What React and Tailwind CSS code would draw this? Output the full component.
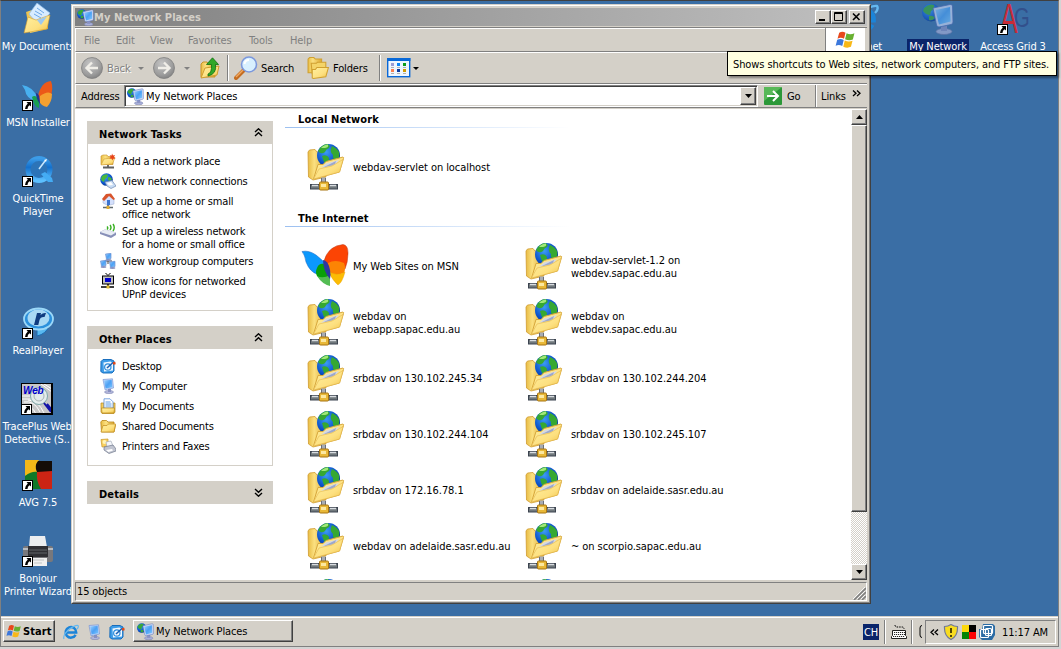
import React from 'react';

const RAISED =
  'border border-t-white border-l-white border-r-[#404040] border-b-[#404040] bg-[#d4d0c8] shadow-[inset_-1px_-1px_0_#808080]';

function Svg({ s = 16, vb = 16, children, className = '' }) {
  return (
    <svg width={s} height={s} viewBox={`0 0 ${vb} ${vb}`} className={'block shrink-0 ' + className}>
      {children}
    </svg>
  );
}

function Defs() {
  return (
    <svg width="0" height="0" className="absolute">
      <defs>
        <linearGradient id="fold" x1="0" y1="0" x2="1" y2="1">
          <stop offset="0" stopColor="#fff0a0" />
          <stop offset="0.6" stopColor="#fde080" />
          <stop offset="1" stopColor="#f0c040" />
        </linearGradient>
        <linearGradient id="foldb" x1="0" y1="0" x2="1" y2="0">
          <stop offset="0" stopColor="#e8bc44" />
          <stop offset="0.35" stopColor="#fbe080" />
          <stop offset="1" stopColor="#dca830" />
        </linearGradient>
        <radialGradient id="globe" cx="0.4" cy="0.35" r="0.7">
          <stop offset="0" stopColor="#3c9cf4" />
          <stop offset="0.7" stopColor="#0a50c8" />
          <stop offset="1" stopColor="#06307c" />
        </radialGradient>
        <linearGradient id="screen" x1="0" y1="0" x2="1" y2="1">
          <stop offset="0" stopColor="#9fd2ff" />
          <stop offset="0.5" stopColor="#4ba0f4" />
          <stop offset="1" stopColor="#7fc8ff" />
        </linearGradient>
        <radialGradient id="grayball" cx="0.4" cy="0.3" r="0.75">
          <stop offset="0" stopColor="#c4c4c4" />
          <stop offset="0.7" stopColor="#9c9c9c" />
          <stop offset="1" stopColor="#808080" />
        </radialGradient>
        <linearGradient id="aqua" x1="0" y1="0" x2="0" y2="1">
          <stop offset="0" stopColor="#3c9ce8" />
          <stop offset="0.4" stopColor="#1470cc" />
          <stop offset="1" stopColor="#5cc0ff" />
        </linearGradient>
      </defs>
    </svg>
  );
}

const Flag = ({ w = 16 }) => (
  <svg width={w} height={w} viewBox="0 0 20 20" className="block shrink-0">
    <path d="M4 3.500Q7 1.500 10 3.500L8.600 9.400Q5.500 7.400 2.400 9.200Z" fill="#e8481c" />
    <path d="M11 4Q14.500 6 18.500 4L17 10Q13.500 11.500 9.600 9.800Z" fill="#68b030" />
    <path d="M2.100 10.300Q5.300 8.500 8.300 10.500L6.900 16.200Q3.800 14.300 .6 16Z" fill="#3c78dc" />
    <path d="M9.300 11Q13 12.800 16.700 11.200L15.200 17Q11.500 18.600 7.900 16.800Z" fill="#f8b818" />
  </svg>
);

const NetPC = ({ s = 16 }) => (
  <Svg s={s} vb={32}>
    <ellipse cx="22" cy="28.500" rx="8" ry="3" fill="#a9b0d8" stroke="#7078a8" strokeWidth=".8" />
    <path d="M19 22h6v6h-6z" fill="#8a92c4" />
    <circle cx="9" cy="9.500" r="9" fill="url(#globe)" />
    <path d="M2 5Q7 0 12 2Q13 6 9 8L8 12Q4 12 1 8ZM7 13q4-1 6 2q-3 3-6 2z" fill="#39a838" />
    <path d="M11 5L28 1.500Q30 1 30.500 3L31 19Q31 21 29 21.500L17 24Q15 24 14.500 22Z" fill="#c9d6f4" stroke="#4a64b0" strokeWidth=".8" />
    <path d="M13.500 7L28 4L28.600 18.500L17 21.500Z" fill="url(#screen)" />
  </Svg>
);

const Computer = () => (
  <Svg>
    <ellipse cx="9" cy="14" rx="4.500" ry="1.600" fill="#b4b8dc" stroke="#6c74a4" strokeWidth=".5" />
    <path d="M8 11h3v3H8z" fill="#8890c0" />
    <path d="M3 1.500L12.500 .8L13.500 10L5 11.800Z" fill="#c4d6f8" stroke="#6c8cd0" strokeWidth=".6" />
    <path d="M4 2.500L11.600 1.800L12.400 9.200L5.600 10.600Z" fill="url(#screen)" />
  </Svg>
);

const ShowDesktop = () => (
  <Svg>
    <path d="M1 3.500L3 1.500H11L14 3V13L12 15H3L.8 13.500Z" fill="#3c9ce8" stroke="#0c64b8" strokeWidth=".9" />
    <path d="M3.500 4.500l7-1 2.500 2v7l-9 1z" fill="#f0f8ff" />
    <circle cx="7.800" cy="9" r="3.200" fill="none" stroke="#2c8cdc" strokeWidth="1.200" />
    <path d="M7 10L13 4.500" stroke="#1c60b0" strokeWidth="1.600" />
    <path d="M13 5.500L15.500 5" stroke="#e04818" strokeWidth="2.400" />
  </Svg>
);

const NetFolder = () => (
  <Svg s={48} vb={48}>
    <path d="M7 9L8.500 7L14 6.500L16 9L25 10V34L12 37L7.500 34Z" fill="url(#foldb)" stroke="#d09c30" strokeWidth=".8" />
    <circle cx="27.500" cy="12.500" r="11.500" fill="url(#globe)" />
    <path d="M17 8Q20 2 26 1Q30 2 28 5Q25 6 24 9Q20 12 17 8ZM31 3Q36 5 38 9Q39 14 36 18Q31 17 32 12Q28 9 31 3ZM21 13q5-2 7 2q0 5-3 7q-3-4-4-9z" fill="#36a832" />
    <path d="M20 5q3-3.500 7-3.500q1 3-3 3.500z" fill="#a0e878" />
    <path d="M12.500 36L17 21.500H22L25 18.500L42 14Q43 14.500 42.500 15.500L38.500 29Z" fill="url(#fold)" stroke="#d8a83c" strokeWidth="1" />
    <path d="M20 25L25 20.500L38 17L35 21Z" fill="#d4d8e4" />
    <path d="M22 24.500L35 18L34 21L31 22.500Z" fill="#9ca8cc" />
    <path d="M12.500 36L18 26L31 23L42 16.500L38.500 29Z" fill="url(#fold)" stroke="#e4b850" strokeWidth=".6" />
    <path d="M20 34.500h5V40h-5z" fill="#a8acb4" />
    <path d="M20.500 35v5M24.500 35v5" stroke="#5c6068" strokeWidth=".8" />
    <rect x="9.500" y="41.500" width="27" height="4.500" fill="#70787c" stroke="#3c4450" strokeWidth="1" />
    <path d="M11 42.500h6M29 42.500h6" stroke="#d8dce0" strokeWidth="1.500" />
    <rect x="18.500" y="39" width="9" height="8" rx="1" fill="#e8b838" stroke="#a87410" />
    <path d="M20 41h5v3h-5z" fill="#fce8a0" />
  </Svg>
);

const MsnBig = () => (
  <Svg s={48} vb={48}>
    <path d="M1 9.500Q8 8 15 13Q20 17 23 20L22 30L16 32Q9 30 5 20Q4 13 1 9.500Z" fill="#0c98fc" stroke="#1060c0" strokeWidth=".5" />
    <path d="M23 19Q27 4 42 2.500Q47 3 47 11Q47 20 44 27L27 28Z" fill="#fc4404" stroke="#b83414" strokeWidth=".5" />
    <path d="M27 21Q34 17 43 21Q45 26 43 31L36 33L28 31Z" fill="#fc8404" />
    <path d="M27 29Q35 35 44 30Q41 41 37 43Q32 39 27 29Z" fill="#fcbc04" stroke="#e8a000" strokeWidth=".4" />
    <path d="M16 26Q18 21 23 22L29 34L27 37Q20 38 16 34Q14 30 16 26Z" fill="#08a008" />
    <path d="M16 34Q22 37 29 33V44Q21 42 16 34Z" fill="#54bc54" />
    <path d="M22 18Q27 18 29 28Q30 33 29 37Q22 29 22 18Z" fill="#2c38a0" />
  </Svg>
);

const Shortcut = () => (
  <svg width="11" height="11" viewBox="0 0 11 11" className="absolute bottom-0 left-0">
    <rect x=".5" y=".5" width="10" height="10" fill="#fff" stroke="#000" />
    <path d="M4.500 2H9V6.500L7.600 5.200Q5.500 6.500 5.500 9H3Q3 6 5.800 3.500Z" fill="#000" />
  </svg>
);

const DocsBig = () => (
  <Svg s={32} vb={32}>
    <path d="M4 9L10 7L26 13V26L8 30Z" fill="url(#foldb)" />
    <path d="M7 11L15 0L28 10L18 24Z" fill="#d8ecff" stroke="#88b8e8" strokeWidth=".7" />
    <path d="M13 8L20 12M12 11L19 15M15 5L22 10" stroke="#6ca8e8" strokeWidth="1" />
    <path d="M2 30L6 14L14 17L28 12L25 26Z" fill="url(#fold)" stroke="#d09c30" strokeWidth=".6" />
    <path d="M15 17L25 13.500L19 22Z" fill="#9cc8f0" />
  </Svg>
);
const MsnSmall = () => (
  <Svg s={32} vb={32}>
    <path d="M0 6Q10 7 16 19L13 22Q4 19 3 11Z" fill="#48b0f0" />
    <path d="M16 17Q19 3 29 2Q32 10 28 19L18 23Z" fill="#ec5818" />
    <path d="M18 17Q26 11 30 15Q30 23 25 28Q19 27 17 22Z" fill="#f4a030" />
    <path d="M10 18Q14 15 17 22L17 29Q12 28 10 18Z" fill="#18a050" />
    <path d="M14 14Q18 14 18 25Q14 20 14 14Z" fill="#203890" />
  </Svg>
);
const QuickTime = () => (
  <Svg s={32} vb={32}>
    <circle cx="17" cy="14.500" r="11" fill="#2c74b8" stroke="url(#aqua)" strokeWidth="5" />
    <path d="M19 19L26 27H31L30 23L23 17Z" fill="#44acf4" />
    <path d="M17 14L23 6" stroke="#c8e8ff" strokeWidth="1.600" />
    <path d="M22 5l3-1-1 3z" fill="#fff" />
  </Svg>
);
const Real = () => (
  <Svg s={32} vb={32}>
    <path d="M15 29L15 22L27 19Q24 27 15 29Z" fill="#58b8f0" stroke="#1c6ab0" />
    <ellipse cx="16.500" cy="12" rx="14.500" ry="10.500" fill="#2c90dc" stroke="#9cd8f8" strokeWidth="1.800" />
    <ellipse cx="16.500" cy="11" rx="11" ry="8.500" fill="#a8d8f4" />
    <path d="M12 18L15 6H19L18.500 8Q21 5.500 24 6L22.500 10Q18.500 9.500 17.500 13L16.300 18Z" fill="#103c80" />
  </Svg>
);
const Trace = () => (
  <div className="relative h-8 w-8 overflow-hidden border border-b-2 border-r-2 border-black bg-[#c8c8c8]">
    <svg width="30" height="30" viewBox="0 0 30 30">
      <path d="M0 12L14 12M0 15L12 15M2 18Q12 16 18 28M6 16Q16 16 22 29M0 24Q10 20 14 30M19 0L30 8M22 0L30 5" stroke="#fff" fill="none" strokeWidth="1" />
      <circle cx="17" cy="12" r="8.500" fill="#e4ecec" stroke="#80a8a8" />
      <circle cx="17" cy="12" r="5" fill="none" stroke="#a8b4b4" />
      <path d="M22 19L29 28M25 20L30 26" stroke="#1414a8" strokeWidth="2" />
    </svg>
    <span className="absolute left-[1px] top-[1px] font-['Liberation_Sans'] text-[10px] font-bold italic leading-[12px] text-[#0000cc]">Web</span>
  </div>
);
const Avg = () => (
  <Svg s={32} vb={32}>
    <path d="M3 1H17Q13 6 15 13L3 17Z" fill="#f4b818" />
    <path d="M16 2H30V14L15 13Q12 7 16 2Z" fill="#140c08" />
    <path d="M3 17Q10 12 15 13Q14 22 20 30H3Z" fill="#107828" />
    <path d="M15 13L30 12V30H19Q14 22 15 13Z" fill="#cc2414" />
  </Svg>
);
const Printer = () => (
  <Svg s={32} vb={32}>
    <path d="M8 1H23L25 12H7Z" fill="#eceef0" />
    <rect x="1" y="11" width="30" height="16" rx="2" fill="#78787c" />
    <path d="M1 14H31" stroke="#b8bcc0" strokeWidth="2" />
    <rect x="6" y="11" width="20" height="11" fill="#303034" />
    <path d="M7 15H25M7 18H25" stroke="#606468" />
    <path d="M8 23H25V31H8Z" fill="#f0f0f0" />
    <path d="M10 25H22M12 28H20" stroke="#c0c4c4" />
  </Svg>
);
const IE = ({ s = 16 }) => (
  <Svg s={s}>
    <path d="M12.600 10.800A5.300 5.300 0 1 1 13.200 8.500H4" fill="none" stroke="#1c84d8" strokeWidth="2.500" />
    <path d="M1 15Q-.5 11 6 5.500Q12 1 15 1.500Q16 3 14 5" fill="none" stroke="#64b8f0" strokeWidth="1.200" />
  </Svg>
);
const AG = () => (
  <div className="relative h-8 w-8">
    <span className="absolute left-[3px] top-0 origin-left scale-x-[0.62] font-['Liberation_Sans'] text-[43px] leading-[31px] text-[#c82c38]">A</span>
    <span className="absolute left-[17px] top-[6px] origin-left scale-x-75 font-['Liberation_Sans'] text-[27px] leading-[19px] text-[#32508c]">G</span>
  </div>
);

function DeskIcon({ icon, label, pos, shortcut = true, selected = false }) {
  return (
    <div className={'absolute flex w-[76px] flex-col items-center ' + pos}>
      <div className={'relative h-8 w-8 ' + (selected ? 'opacity-65' : '')}>
        {icon}
        {shortcut && <Shortcut />}
      </div>
      <div
        className={
          'mt-1 whitespace-pre px-0.5 pt-px text-center leading-[13px] text-white ' + (selected ? 'bg-[#0a246a]' : '')
        }
      >
        {label}
      </div>
    </div>
  );
}

/* Small sidebar icons */
const AddPlace = () => (
  <Svg>
    <path d="M1 3l2-1h4l1 1.500h5v8H1z" fill="url(#foldb)" stroke="#c89028" strokeWidth=".6" />
    <path d="M1 12L4 6L15 4.500L12.500 11Z" fill="url(#fold)" stroke="#c89028" strokeWidth=".5" />
    <path d="M12 .5l1 2 2-.5-1 2 1.500 1.500-2.300.3-.8 1.700-1-2-2 .2 1.300-1.700-1-1.700 2 .2z" fill="#e84418" />
    <path d="M3 14.500h11M8 12v2" stroke="#606060" strokeWidth="1.800" />
  </Svg>
);
const ViewConn = () => (
  <Svg>
    <circle cx="6.500" cy="6.500" r="6.300" fill="url(#globe)" />
    <path d="M2 3Q6 0 8 2Q7 5 5 6L4 9Q1 8 1 6ZM8 4q3 0 4 2q-2 3-4 1z" fill="#48b83c" />
    <path d="M5 9L12 7.500L16 13L11 15.500L7 13Z" fill="#c8dcf4" stroke="#7088b0" strokeWidth=".7" />
    <path d="M7 10L11 9L13 12L9 12.500Z" fill="#fff" />
  </Svg>
);
const Home = () => (
  <Svg>
    <path d="M3 6L9 2L14 6V11L8 12.500L3 10Z" fill="#d4e0fc" stroke="#98a8cc" strokeWidth=".5" />
    <path d="M2 6L6 1L11 .5L15 6L13.500 7L9 3L4 8Z" fill="#d8542c" />
    <path d="M7 7h3v5H7z" fill="#3c74d0" />
    <path d="M3 14.500h10M8 12v2" stroke="#60686c" strokeWidth="1.600" />
    <rect x="6.500" y="13" width="3" height="3" fill="#e0ac30" />
  </Svg>
);
const Wireless = () => (
  <Svg>
    <path d="M0 9L5 6.500L16 9.500V12L11 15L0 11Z" fill="#8890b8" />
    <path d="M0 9L5 6.500L16 9.500L11 12.500Z" fill="#e8ecf4" />
    <path d="M7 3.500q1.500 1.500 0 3M10 2q2 2.500 0 5M13 1q2.500 3.500 0 7" fill="none" stroke="#38b020" strokeWidth="1.400" />
  </Svg>
);
const Pc = ({ x, y }) => (
  <g transform={`translate(${x} ${y})`}>
    <ellipse cx="3.500" cy="7" rx="3" ry="1" fill="#8c94c0" />
    <path d="M.5 1L6 .3V5.500L1.500 6.300Z" fill="url(#screen)" stroke="#7090d0" strokeWidth=".7" />
  </g>
);
const Workgroup = () => (
  <Svg>
    <path d="M5 8h7M8 6v5" stroke="#484848" />
    <Pc x={5} y={0} />
    <Pc x={0} y={7} />
    <Pc x={9} y={8} />
  </Svg>
);
const Upnp = () => (
  <Svg>
    <path d="M5.500 0L8 2.500L10.500 0" stroke="#000" fill="none" />
    <rect x="2.500" y="3" width="11" height="8" fill="#c0c0c0" stroke="#000" />
    <rect x="5" y="5" width="6" height="4" fill="#0000d0" />
    <path d="M1 14h14M8 11v3" stroke="#000" strokeWidth="1.400" strokeDasharray="6 1" />
    <rect x="6.500" y="12.500" width="3" height="3" fill="#e8c030" />
  </Svg>
);
const MyDocs = () => (
  <Svg>
    <path d="M1 5h3v8h9V5h2v9l-1 1.500H2L1 14z" fill="#f4cc5c" stroke="#b88818" strokeWidth=".7" />
    <path d="M4 .8h6l3 3V10H4z" fill="#fff" stroke="#5c90d8" strokeWidth=".8" />
    <path d="M5.500 4h5M5.500 6h6M5.500 8h6" stroke="#5c9ce4" />
    <path d="M1.500 10h13l-.5 5H2z" fill="url(#fold)" stroke="#b88818" strokeWidth=".7" />
  </Svg>
);
const Shared = () => (
  <Svg>
    <path d="M.8 4L2 2.500h4.500L8 4h6v2.500l1.500.5L14 14H1.500z" fill="url(#foldb)" stroke="#b88418" strokeWidth=".8" />
    <path d="M1 14L3 7.500h4L8.500 6H15.500L14 14z" fill="url(#fold)" stroke="#c89428" strokeWidth=".8" />
  </Svg>
);
const Printers = () => (
  <Svg>
    <path d="M1 1.500L8 1v7L2 9z" fill="#f8d060" stroke="#c89828" strokeWidth=".7" />
    <circle cx="4.500" cy="4" r="2" fill="#fff4b8" />
    <path d="M6 4l5-1 2 5-6 1z" fill="#f4f6fa" stroke="#9ca4b4" strokeWidth=".6" />
    <path d="M4 9L13 7L16 11V13L9 15.500L4 12Z" fill="#c0c4d0" stroke="#70788c" strokeWidth=".7" />
    <path d="M6 12l6-1 1 1.500-4.500 1.500z" fill="#fff" />
  </Svg>
);

const Chevrons = ({ down = false }) => (
  <svg width="9" height="9" viewBox="0 0 9 9" className={down ? 'rotate-180' : ''}>
    <path d="M1 4L4.500 .8L8 4M1 8L4.500 4.800L8 8" fill="none" stroke="#000" strokeWidth="1.400" />
  </svg>
);

function Panel({ title, items, height, down }) {
  return (
    <section className={'flex w-[186px] flex-col ' + height}>
      <header className="flex h-[23px] shrink-0 items-center justify-between bg-[#d4d0c8] pl-3 pr-[10px]">
        <span className="pt-[3px] font-bold tracking-[0.15px]">{title}</span>
        <Chevrons down={down} />
      </header>
      {items && (
        <ul className="flex flex-1 flex-col gap-1 border border-t-0 border-[#d4d0c8] pl-3 pt-[10px]">
          {items.map(([icon, text]) => (
            <li key={text} className="flex min-h-4 items-start gap-[6px]">
              <span className="-mt-px h-4">{icon}</span>
              <span className="-mb-px mt-px whitespace-pre tracking-[-0.17px]">{text}</span>
            </li>
          ))}
        </ul>
      )}
    </section>
  );
}

const tasks = [
  [<AddPlace />, 'Add a network place'],
  [<ViewConn />, 'View network connections'],
  [<Home />, 'Set up a home or small\noffice network'],
  [<Wireless />, 'Set up a wireless network\nfor a home or small office'],
  [<Workgroup />, 'View workgroup computers'],
  [<Upnp />, 'Show icons for networked\nUPnP devices'],
];
const places = [
  [<ShowDesktop />, 'Desktop'],
  [<Computer />, 'My Computer'],
  [<MyDocs />, 'My Documents'],
  [<Shared />, 'Shared Documents'],
  [<Printers />, 'Printers and Faxes'],
];
const internet = [
  'My Web Sites on MSN',
  'webdav-servlet-1.2 on\nwebdev.sapac.edu.au',
  'webdav on\nwebapp.sapac.edu.au',
  'webdav on\nwebdev.sapac.edu.au',
  'srbdav on 130.102.245.34',
  'srbdav on 130.102.244.204',
  'srbdav on 130.102.244.104',
  'srbdav on 130.102.245.107',
  'srbdav on 172.16.78.1',
  'srbdav on adelaide.sasr.edu.au',
  'webdav on adelaide.sasr.edu.au',
  '~ on scorpio.sapac.edu.au',
  '',
  '',
];

const Item = ({ text }) => (
  <li className="flex h-[56px] w-[218px] items-center">
    <span className="mr-1 w-12 shrink-0">{text.includes('MSN') ? <MsnBig /> : <NetFolder />}</span>
    <span className="whitespace-pre pt-px tracking-[-0.07px]">{text}</span>
  </li>
);

const GroupTitle = ({ children }) => (
  <div className="h-[18px] w-[285px]">
    <h2 className="h-[17px] pl-[13px] pt-[3px] font-bold tracking-[0.1px]">{children}</h2>
    <div className="h-px bg-gradient-to-r from-[#9cc0f0] to-white" />
  </div>
);

const Down = ({ c = '#000', w = 6 }) => (
  <svg width={w} height={w > 6 ? 4 : 3} viewBox="0 0 6 3" preserveAspectRatio="none" className="block shrink-0">
    <path d="M0 0H6L3 3Z" fill={c} />
  </svg>
);

const Vsep = () => <div className="h-[26px] w-[2px] shrink-0 border-l border-r border-l-[#808080] border-r-white" />;

const Ball = ({ back }) => (
  <Svg s={22} vb={22}>
    <circle cx="11" cy="11" r="10.500" fill="url(#grayball)" stroke="#808080" strokeWidth=".8" />
    <path
      d={back ? 'M17 11H6M11 5.500L5.500 11L11 16.500' : 'M5 11H16M11 5.500L16.500 11L11 16.500'}
      fill="none"
      stroke="#f0eee8"
      strokeWidth="2.400"
    />
  </Svg>
);

function TitleBar() {
  const cap = 'flex h-[14px] w-4 items-center justify-center ' + RAISED;
  return (
    <div className="flex h-[18px] shrink-0 items-center bg-gradient-to-r from-[#808080] to-[#c0c0c0] px-0.5">
      <NetPC s={17} />
      <span className="flex-1 pt-px font-bold tracking-[0.05px] text-[#d4d0c8]">My Network Places</span>
      <button className={cap}>
        <svg width="12" height="10" viewBox="0 0 12 10"><path d="M2 8h6" stroke="#000" strokeWidth="2" /></svg>
      </button>
      <button className={cap}>
        <svg width="12" height="10" viewBox="0 0 12 10"><path d="M1.500 .5h8v8h-8zM1.500 1.500h8" fill="none" stroke="#000" /></svg>
      </button>
      <button className={'ml-0.5 ' + cap}>
        <svg width="12" height="10" viewBox="0 0 12 10"><path d="M2 1.500L8.500 8M8.500 1.500L2 8" stroke="#000" strokeWidth="1.600" /></svg>
      </button>
    </div>
  );
}

function MenuBar() {
  return (
    <div className="flex h-[24px] shrink-0 border-b border-l border-b-[#808080] border-l-white bg-[#d4d0c8]">
      <nav className="flex flex-1 items-center border-t border-white pl-2 text-[#808080]">
        <span className="w-8">File</span>
        <span className="w-[34px]">Edit</span>
        <span className="w-[38px]">View</span>
        <span className="w-[61px]">Favorites</span>
        <span className="w-[41px]">Tools</span>
        <span>Help</span>
      </nav>
      <div className="flex w-[40px] items-center justify-center border-l border-[#808080] bg-white">
        <Flag w={21} />
      </div>
      <div className="w-[2px]" />
    </div>
  );
}

function ToolBar() {
  return (
    <div className="flex h-[32px] shrink-0 items-center border-b border-l border-t border-b-[#808080] border-l-white border-t-white pl-[5px]">
      <Ball back />
      <span className="w-[35px] pl-1 text-[#808080] [text-shadow:1px_1px_0_#fff]">Back</span>
      <Down c="#808080" />
      <span className="w-[9px]" />
      <Ball />
      <span className="w-[9px]" />
      <Down c="#808080" />
      <span className="w-[10px]" />
      <Svg s={22} vb={22}>
        <path d="M1 7l2-2h4l1 2h7v13H1z" fill="url(#foldb)" stroke="#c89428" />
        <path d="M1 21L5 11L19 9L17 18Z" fill="url(#fold)" stroke="#d09c30" />
        <path d="M8 17Q12 16 11.500 7.500H6.500L12.500 .8L18.500 7.500H15.500Q17 17 8 19Z" fill="#30a828" stroke="#107010" strokeWidth=".8" />
      </Svg>
      <span className="w-[5px]" />
      <Vsep />
      <Svg s={24} vb={24} className="ml-[5px]">
        <path d="M2 22L10 14" stroke="#c46c20" strokeWidth="4" strokeLinecap="round" />
        <path d="M2 21L9 14" stroke="#f0a860" strokeWidth="1.500" />
        <circle cx="15" cy="8.500" r="7.500" fill="#d8f0ff" stroke="#7c98dc" strokeWidth="1.600" />
        <path d="M10.500 8Q11 4 15 4" stroke="#fff" strokeWidth="2" fill="none" />
      </Svg>
      <span className="w-[49px] pl-[3px]">Search</span>
      <Svg s={23} vb={22}>
        <path d="M1 2l1.500-1.500h4L8 2h6v13H1z" fill="url(#foldb)" stroke="#d0a030" />
        <path d="M4 6h5l1-1h8v11H5z" fill="#f4d468" stroke="#d0a030" />
        <path d="M5 20V12h3l1.500-2h11L18 19L6 20.500Z" fill="url(#fold)" stroke="#d0a030" />
      </Svg>
      <span className="w-[49px] pl-[3px]">Folders</span>
      <Vsep />
      <svg width="24" height="20" viewBox="0 0 24 20" className="ml-[6px] block">
        <rect x=".7" y=".7" width="22" height="18" fill="#eef6ff" stroke="#0868d8" strokeWidth="1.400" />
        <path d="M0 1.500h23.400" stroke="#0868d8" strokeWidth="3" />
        <path d="M4 6.500h3" stroke="#9c9cd4" strokeWidth="3" />
        <path d="M10 6.500h3" stroke="#0c84f4" strokeWidth="3" />
        <path d="M16 6.500h3" stroke="#0c9c1c" strokeWidth="3" />
        <path d="M4 12.500h3" stroke="#fc8050" strokeWidth="3" />
        <path d="M10 12.500h3" stroke="#0c3ca0" strokeWidth="3" />
        <path d="M16 12.500h3" stroke="#d09c04" strokeWidth="3" />
        <path d="M4 9.500h3m3 0h3m3 0h3M4 15.500h3m3 0h3m3 0h3" stroke="#b0b0b0" />
      </svg>
      <span className="w-[2px]" />
      <Down />
    </div>
  );
}

function AddressBar() {
  return (
    <div className="flex h-[24px] shrink-0 border-b border-l border-t border-b-[#808080] border-l-white border-t-white pl-[5px]">
      <span className="w-[43px] pt-[5px]">Address</span>
      <div className="flex h-[22px] w-[634px] items-center border border-b-white border-l-[#808080] border-r-white border-t-[#808080] bg-white pl-[2px] shadow-[inset_1px_1px_0_#404040,inset_-1px_-1px_0_#d4d0c8]">
        <NetPC s={17} />
        <span className="flex-1 pl-[2px] pt-px">My Network Places</span>
        <button className={'mr-px flex h-[18px] w-4 items-center justify-center ' + RAISED}>
          <Down w={7} />
        </button>
      </div>
      <div className="ml-[6px] flex w-[52px] items-center border-r border-[#808080]">
        <svg width="18" height="18" viewBox="0 0 18 18">
          <rect width="18" height="18" rx="1" fill="#2c9838" />
          <path d="M0 0h18L0 14z" fill="#58b858" />
          <path d="M3 9h11M9 4l5 5-5 5" fill="none" stroke="#fff" strokeWidth="2" />
        </svg>
        <span className="pl-[5px]">Go</span>
      </div>
      <div className="flex flex-1 border-l border-white pl-1 pt-[5px]">
        <span className="w-[31px]">Links</span>
        <svg width="9" height="7" viewBox="0 0 9 7">
          <path d="M1 .5L4 3.300L1 6M5 .5L8 3.300L5 6" fill="none" stroke="#000" strokeWidth="1.300" />
        </svg>
      </div>
    </div>
  );
}

function ExplorerWindow() {
  return (
    <div className="absolute left-[71px] top-[4px] h-[600px] w-[800px] border border-b-[#404040] border-l-[#d4d0c8] border-r-[#404040] border-t-[#d4d0c8] bg-[#d4d0c8]">
      <div className="flex h-full flex-col border border-b-[#808080] border-l-white border-r-[#808080] border-t-white px-[2px] pb-[2px] pt-[2px]">
        <TitleBar />
        <div className="mt-px h-px shrink-0 bg-[#808080]" />
        <MenuBar />
        <ToolBar />
        <AddressBar />
        <div className="mt-px flex h-[471px] shrink-0 bg-white">
          <aside className="flex w-[210px] flex-col gap-[15px] pl-3 pt-[12px]">
            <Panel title="Network Tasks" items={tasks} height="h-[190px]" />
            <Panel title="Other Places" items={places} height="h-[140px]" />
            <Panel title="Details" height="h-[23px]" down />
          </aside>
          <main className="h-full flex-1 overflow-hidden">
            <div className="h-px" />
            <GroupTitle>Local Network</GroupTitle>
            <ul className="flex pl-4 pt-[11px]">
              <Item text="webdav-servlet on localhost" />
            </ul>
            <div className="h-[14px]" />
            <GroupTitle>The Internet</GroupTitle>
            <ul className="flex flex-wrap pl-4 pt-[11px]">
              {internet.map((t, i) => (
                <Item key={i} text={t} />
              ))}
            </ul>
          </main>
          <div className="flex w-4 flex-col bg-[#eae8e4]">
            <button className={'flex h-4 items-center justify-center ' + RAISED}>
              <span className="rotate-180"><Down w={7} /></span>
            </button>
            <div className={'h-[387px] ' + RAISED} />
            <div className="flex-1 bg-[repeating-conic-gradient(#fff_0_25%,#d4d0c8_0_50%)] bg-[length:2px_2px]" />
            <button className={'flex h-4 items-center justify-center ' + RAISED}>
              <Down w={7} />
            </button>
          </div>
        </div>
        <footer className="mt-[2px] flex h-[19px] shrink-0 items-center justify-between border border-b-white border-l-[#808080] border-r-white border-t-[#808080] pl-px">
          <span>15 objects</span>
          <svg width="13" height="13" viewBox="0 0 13 13" className="self-end">
            <path d="M1 13L13 1M5 13L13 5M9 13L13 9" stroke="#808080" strokeWidth="1.600" />
            <path d="M0 12L12 0M4 12L12 4M8 12L12 8" stroke="#fff" strokeWidth=".8" />
          </svg>
        </footer>
      </div>
    </div>
  );
}

function Taskbar() {
  return (
    <div className="flex h-[29px] shrink-0 items-start border-t border-white bg-[#d4d0c8] pl-[2px] pt-[2px]">
      <button className={'flex h-[22px] w-[52px] items-center pl-0.5 ' + RAISED}>
        <Flag w={16} />
        <span className="pl-px pt-px font-bold tracking-[0.1px]">Start</span>
      </button>
      <div className="flex h-[23px] w-[78px] items-center gap-[7px] pl-2">
        <IE />
        <Computer />
        <ShowDesktop />
      </div>
      <button className={'flex h-[22px] w-[160px] items-center pl-[3px] ' + RAISED}>
        <NetPC s={17} />
        <span className="pl-[2px] pt-px">My Network Places</span>
      </button>
      <div className="flex-1" />
      <span className="mr-px mt-[4px] h-4 w-4 bg-[#0a246a] pt-[2px] text-center text-white">CH</span>
      <div className="ml-[4px] h-6 w-[2px] border-l border-r border-l-[#808080] border-r-white" />
      <Svg className="ml-[5px] mt-[4px]">
        <path d="M4 1q0 2 2 2h5q2 0 2 2" stroke="#000" fill="none" strokeDasharray="1.500 1" />
        <path d="M1.500 6.500h13v5l1 1v2H.5v-2l1-1z" fill="#fff" stroke="#202020" />
        <path d="M3 8.500h11M3 10.500h11M2 12.500h12" stroke="#202020" strokeDasharray="1.200 .8" />
      </Svg>
      <div className="ml-[4px] h-6 w-[2px] border-l border-r border-l-[#808080] border-r-white" />
      <svg width="4" height="13" viewBox="0 0 4 13" className="ml-[6px] mt-[5px]">
        <path d="M3 .5Q1 .5 1 3V10Q1 12.500 3 12.500" stroke="#000" fill="none" />
      </svg>
      <div className="ml-[2px] mr-[2px] flex h-6 w-[131px] items-center border border-b-white border-l-[#808080] border-r-white border-t-[#808080] pl-1">
        <svg width="9" height="7" viewBox="0 0 9 7">
          <path d="M4 .5L1 3.300L4 6M8 .5L5 3.300L8 6" fill="none" stroke="#000" strokeWidth="1.300" />
        </svg>
        <Svg className="ml-1">
          <path d="M8 .5Q11 2.500 14.500 2.500Q15 12 8 15.500Q1 12 1.500 2.500Q5 2.500 8 .5Z" fill="#f8dc20" stroke="#707898" strokeWidth="1.200" />
          <path d="M8 4v5M8 11v2" stroke="#403800" strokeWidth="1.800" />
        </Svg>
        <Svg s={14} vb={14} className="ml-[3px]">
          <path d="M0 0h7v7H0z" fill="#fcd80c" />
          <path d="M7 0h7v7H7z" fill="#000" />
          <path d="M0 7h7v7H0z" fill="#048404" />
          <path d="M7 7h7v7H7z" fill="#fc0404" />
        </Svg>
        <Svg className="ml-[3px]">
          <path d="M4 0h10l2 2v9l-3 5H3l-3-3V5h3z" fill="#2c6ca4" />
          <rect x="4.500" y="1.500" width="9" height="8" rx="1" fill="none" stroke="#fff" strokeWidth="1.200" />
          <rect x="1.500" y="5.500" width="8" height="8" rx="1" fill="none" stroke="#fff" strokeWidth="1.200" />
          <rect x="6.500" y="4.500" width="6" height="7" rx="1" fill="none" stroke="#fff" strokeWidth="1.200" />
        </Svg>
        <span className="ml-[7px] whitespace-nowrap">11:17 AM</span>
      </div>
    </div>
  );
}

export default function App() {
  return (
    <div className="relative h-[649px] w-[1061px] overflow-hidden bg-[#d4d4d4] font-['DejaVu_Sans_Condensed','DejaVu_Sans',sans-serif] text-[11px] leading-[13px] tracking-[-0.13px] text-black">
      <Defs />
      <div className="flex h-[647px] w-[1059px] flex-col border border-b-[#808080] border-l-[#808080] border-r-[#808080] border-t-[#404040]">
        <div className="flex-1 border-b border-[#d4d0c8] bg-[#3a6ea5]" />
        <Taskbar />
      </div>
      <DeskIcon pos="left-[0px] top-[3px]" icon={<DocsBig />} label="My Documents" shortcut={false} />
      <DeskIcon pos="left-[0px] top-[79px]" icon={<MsnSmall />} label="MSN Installer" />
      <DeskIcon pos="left-[0px] top-[155px]" icon={<QuickTime />} label={'QuickTime\nPlayer'} />
      <DeskIcon pos="left-[0px] top-[307px]" icon={<Real />} label="RealPlayer" />
      <DeskIcon pos="left-[-1px] top-[383px]" icon={<Trace />} label={'TracePlus Web\nDetective (S..'} />
      <DeskIcon pos="left-[0px] top-[459px]" icon={<Avg />} label="AVG 7.5" />
      <DeskIcon pos="left-[0px] top-[535px]" icon={<Printer />} label={'Bonjour\nPrinter Wizard'} />
      <DeskIcon pos="left-[825px] top-[3px]" icon={<IE s={32} />} label="Internet" />
      <DeskIcon pos="left-[900px] top-[3px]" icon={<NetPC s={32} />} label="My Network" shortcut={false} selected />
      <DeskIcon pos="left-[975px] top-[3px]" icon={<AG />} label="Access Grid 3" />
      <ExplorerWindow />
      <div className="absolute left-[727px] top-[51px] flex h-[25px] w-[330px] items-center whitespace-nowrap border border-black bg-[#ffffe1] pl-[5px] pt-px tracking-[-0.1px] shadow-[2px_2px_2px_rgba(0,0,0,0.4)]">
        Shows shortcuts to Web sites, network computers, and FTP sites.
      </div>
    </div>
  );
}
